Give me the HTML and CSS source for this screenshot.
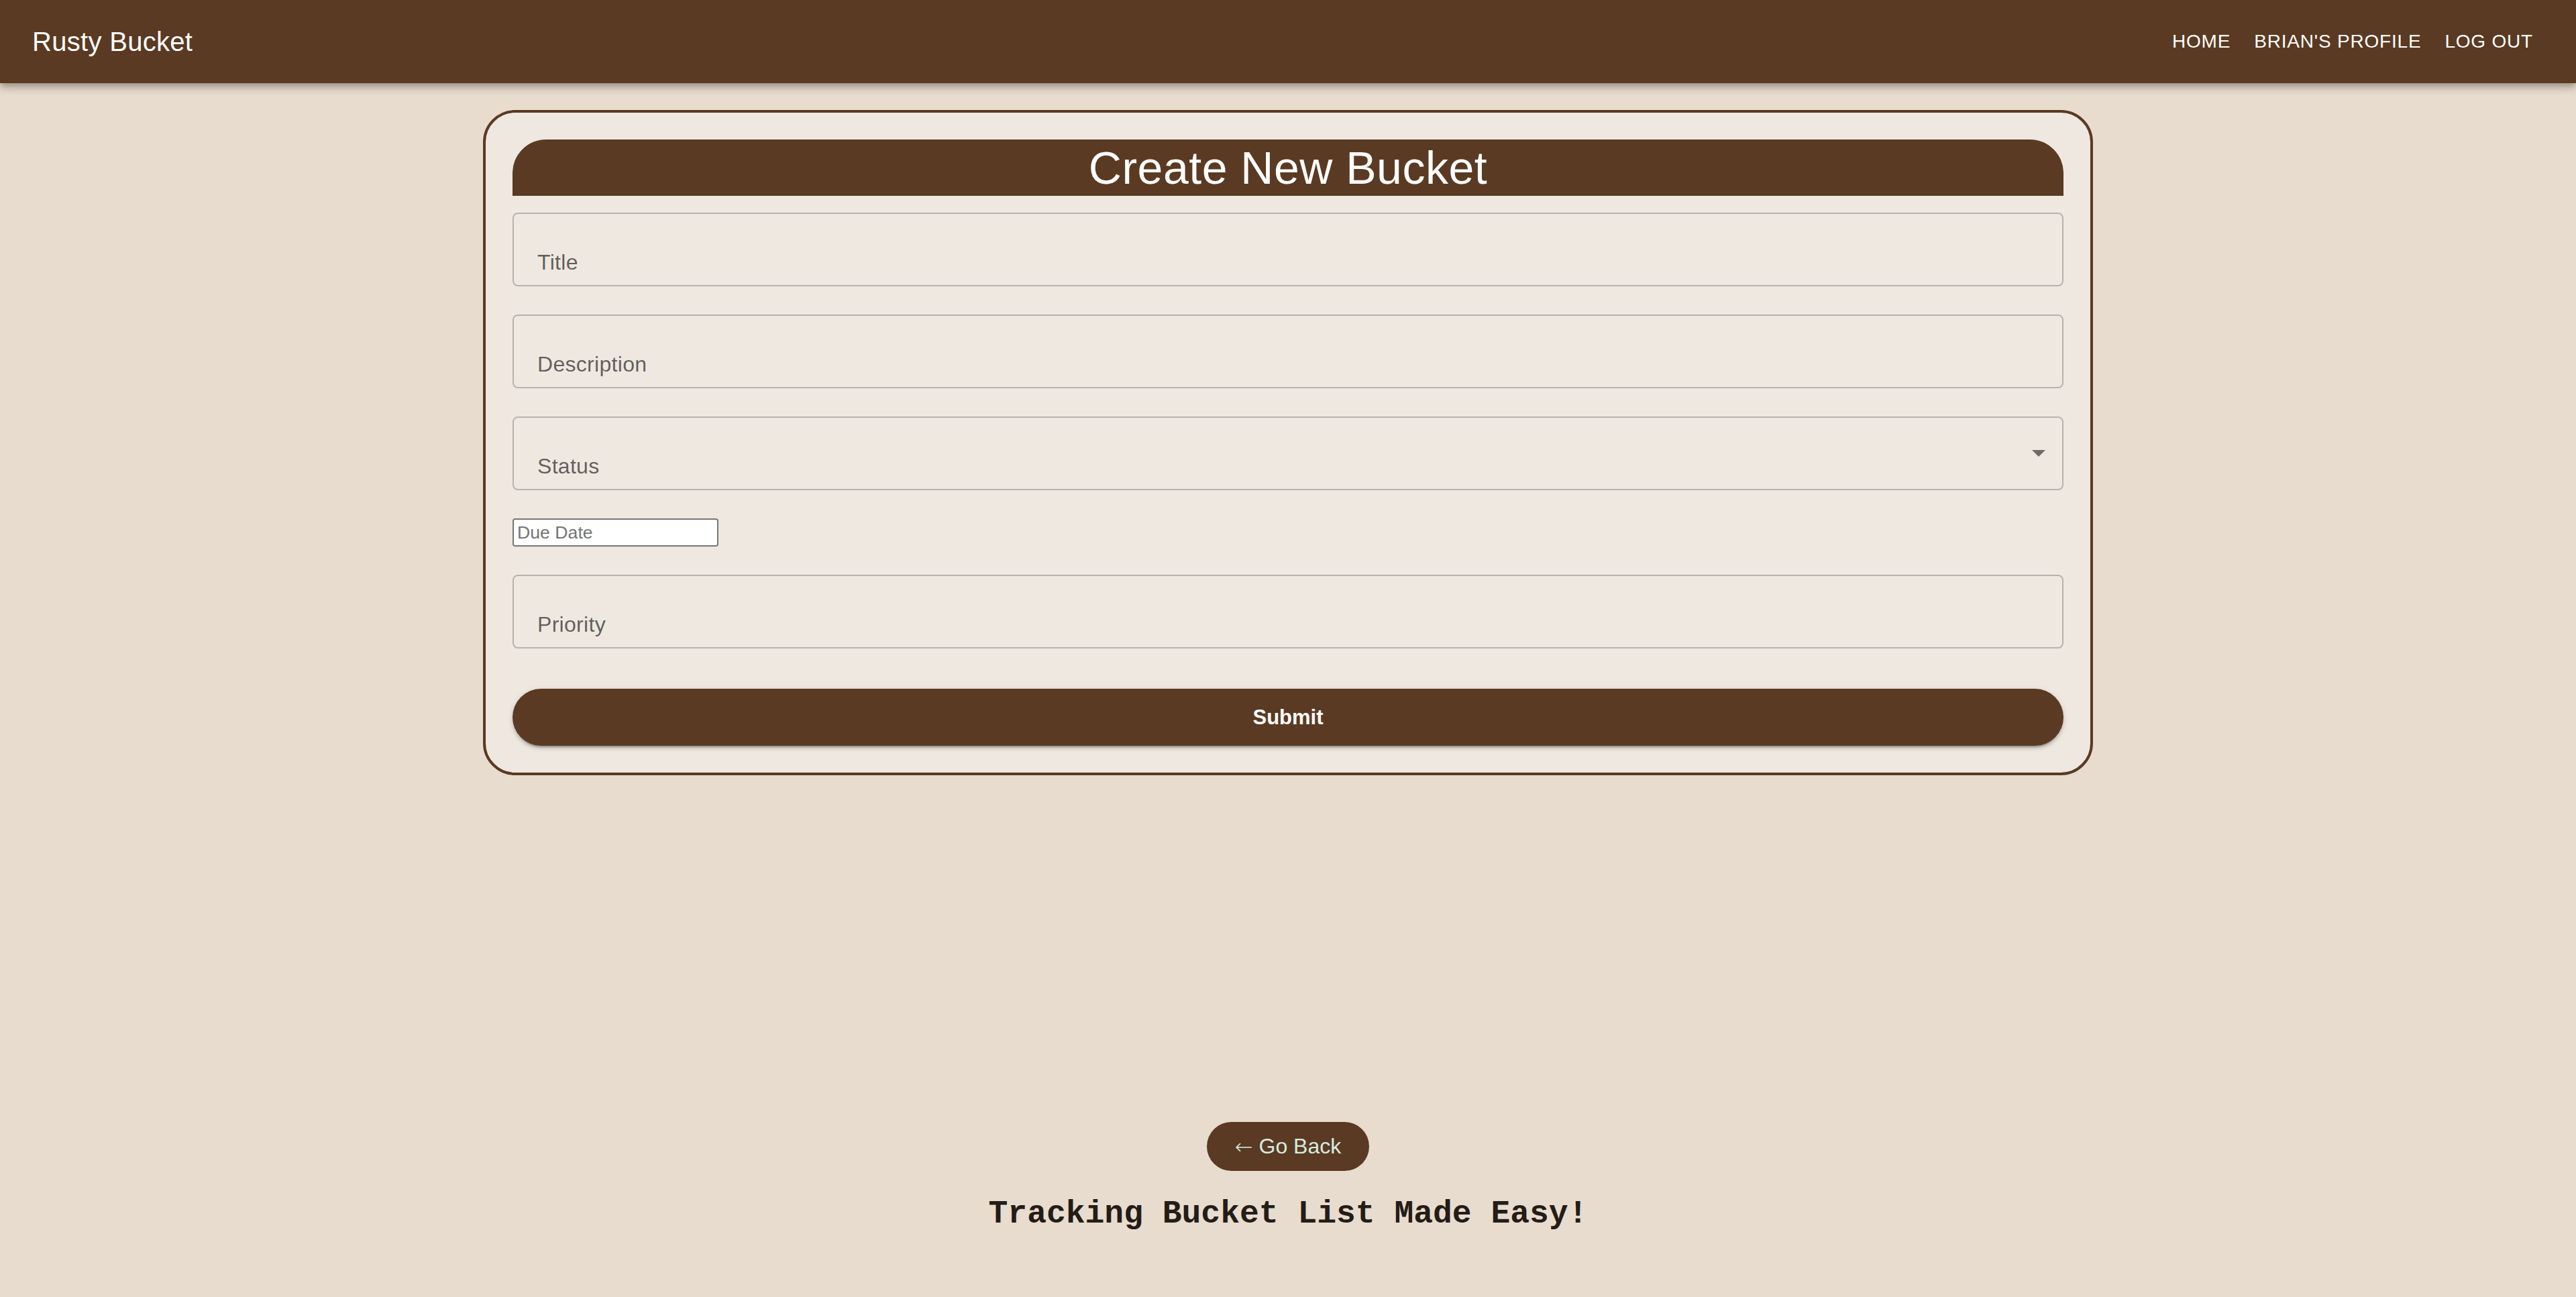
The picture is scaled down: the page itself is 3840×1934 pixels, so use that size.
FILE: index.html
```html
<!DOCTYPE html>
<html lang="en">
<head>
<meta charset="utf-8">
<title>Rusty Bucket</title>
<link rel="stylesheet" href="styles.css">
</head>
<body>
  <header class="appbar">
    <div class="logo">Rusty Bucket</div>
    <nav class="nav">
      <a class="nav-link" href="#">Home</a>
      <a class="nav-link" href="#">Brian's Profile</a>
      <a class="nav-link" href="#">Log Out</a>
    </nav>
  </header>

  <main class="main">
    <form class="card">
      <h1 class="card-title">Create New Bucket</h1>
      <div class="fields">
        <div class="field"><span class="field-label">Title</span></div>
        <div class="field"><span class="field-label">Description</span></div>
        <div class="field field-select">
          <span class="field-label">Status</span>
          <svg class="select-arrow" width="20" height="10" viewBox="0 0 20 10"><path d="M0 0 L10 10 L20 0 Z"/></svg>
        </div>
        <input class="date-input" type="text" placeholder="Due Date">
        <div class="field"><span class="field-label">Priority</span></div>
      </div>
      <button class="submit" type="button">Submit</button>
    </form>
  </main>

  <footer class="footer">
    <a class="back-btn" href="#"><span class="back-arrow">←</span> Go Back</a>
    <h3 class="tagline">Tracking Bucket List Made Easy!</h3>
  </footer>
</body>
</html>
```

FILE: styles.css
```css
* {
  box-sizing: border-box;
}

html, body {
  margin: 0;
  padding: 0;
}

body {
  min-height: 100vh;
  display: flex;
  flex-direction: column;
  background: #e8dccf;
  font-family: "Liberation Sans", Arial, sans-serif;
}

.appbar {
  position: relative;
  z-index: 1;
  height: 124px;
  flex: none;
  display: flex;
  align-items: center;
  justify-content: space-between;
  padding: 0 48px;
  background: #5a3a22;
  box-shadow: 0 4px 8px -2px rgba(0,0,0,0.2), 0 8px 10px 0 rgba(0,0,0,0.14), 0 2px 20px 0 rgba(0,0,0,0.12);
}

.logo {
  color: #ffffff;
  font-size: 40px;
  letter-spacing: 0.3px;
}

.nav {
  display: flex;
  align-items: center;
  gap: 3px;
}

.nav-link {
  color: #ffffff;
  text-decoration: none;
  text-transform: uppercase;
  font-size: 28px;
  letter-spacing: 0.8px;
  padding: 12px 16px;
}

.main {
  flex: 1;
  display: flex;
  justify-content: center;
  align-items: flex-start;
  padding-top: 40px;
}

.card {
  width: 2400px;
  margin: 0;
  padding: 40px;
  background: #efe8e1;
  border: 4px solid #5a3a22;
  border-radius: 48px;
  display: flex;
  flex-direction: column;
}

.card-title {
  margin: 0 0 25px;
  height: 84px;
  line-height: 84px;
  text-align: center;
  font-weight: 400;
  font-size: 68px;
  letter-spacing: 0.5px;
  color: #ffffff;
  background: #5a3a22;
  border-radius: 50px 50px 0 0;
}

.fields {
  display: flex;
  flex-direction: column;
  align-items: flex-start;
  gap: 42px;
}

.field {
  width: 100%;
  height: 110px;
  display: flex;
  align-items: center;
  padding: 0 25px 0 35px;
  border: 2px solid rgba(0,0,0,0.23);
  border-radius: 8px;
}

.field-label {
  align-self: flex-start;
  flex: 1;
  padding-top: 54px;
  font-size: 32px;
  line-height: 36px;
  letter-spacing: 0.3px;
  color: rgba(0,0,0,0.6);
}

.select-arrow {
  display: block;
  flex: none;
  fill: rgba(0,0,0,0.54);
}

.date-input {
  width: 307px;
  height: 42px;
  margin: 0;
  padding: 2px 5px;
  border: 2px solid #767676;
  border-radius: 4px;
  background: #ffffff;
  font-family: "Liberation Sans", Arial, sans-serif;
  font-size: 26.67px;
  color: #000;
}

.date-input::placeholder {
  color: #757575;
}

.submit {
  margin-top: 60px;
  width: 100%;
  height: 85px;
  border: none;
  border-radius: 43px;
  background: #5a3a22;
  color: #ffffff;
  font-family: "Liberation Sans", Arial, sans-serif;
  font-weight: 700;
  font-size: 31px;
  box-shadow: 0 6px 2px -4px rgba(0,0,0,0.2), 0 4px 4px 0 rgba(0,0,0,0.14), 0 2px 10px 0 rgba(0,0,0,0.12);
}

.footer {
  flex: none;
  display: flex;
  flex-direction: column;
  align-items: center;
  padding-bottom: 97px;
}

.back-btn {
  height: 73px;
  display: flex;
  align-items: center;
  padding: 0 42px;
  border-radius: 37px;
  background: #5a3a22;
  color: #d5ebe3;
  text-decoration: none;
  font-size: 32px;
  white-space: pre;
}

.back-arrow {
  font-family: "DejaVu Sans", sans-serif;
  font-weight: 200;
}

.tagline {
  margin: 37px 0 0;
  font-family: "Liberation Mono", "Courier New", monospace;
  font-weight: 700;
  font-size: 48px;
  line-height: 54px;
  color: #241c16;
}
```
